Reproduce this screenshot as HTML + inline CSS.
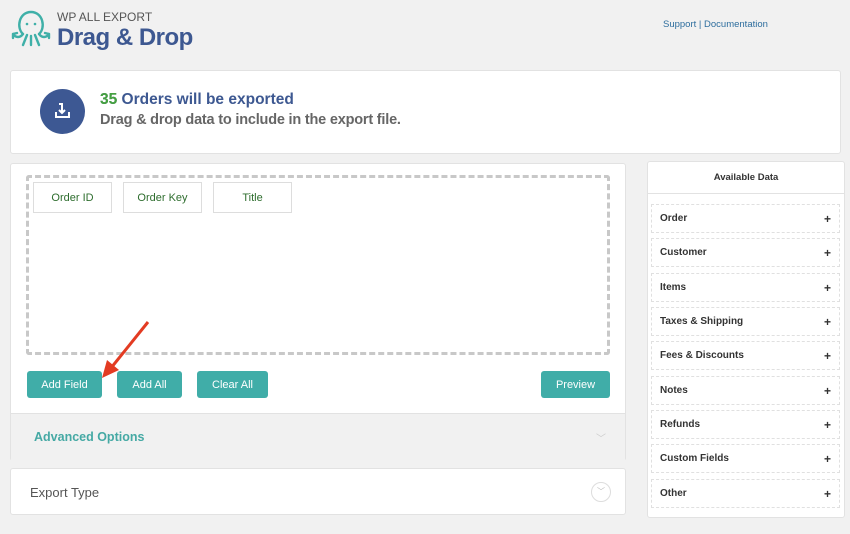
<!DOCTYPE html><html><head><style>
body{margin:0;width:850px;height:534px;background:#f1f1f1;font-family:"Liberation Sans",sans-serif;position:relative;overflow:hidden}
.a{position:absolute}
.box{position:absolute;background:#fff;border:1px solid #e2e2e2;border-radius:3px;box-sizing:border-box}
.fld{position:absolute;top:182px;height:31px;border:1px solid #ddd;box-sizing:border-box;color:#2e6d2e;font-size:11px;text-align:center;line-height:31px;background:#fff}
.btn{position:absolute;top:371px;height:27px;background:#40ada8;color:#fff;font-size:11px;text-align:center;line-height:28px;border-radius:3px}
.row{position:absolute;left:651px;width:189px;height:29px;border:1px dashed #e0e0e0;box-sizing:border-box;font-size:10px;font-weight:bold;color:#333;line-height:28px;padding-left:8px;background:#fff}
.row b{position:absolute;right:8px;top:0;font-size:12px}
</style></head><body>
<svg class="a" style="left:10px;top:8px" width="42" height="42" viewBox="0 0 42 42" fill="none" stroke="#3fb0a8" stroke-width="2.4" stroke-linecap="round">
<path d="M13 26 C6 20 9 4 21 4 C33 4 36 20 29 26"/><circle cx="17" cy="16" r="1.3" fill="#3fb0a8" stroke="none"/><circle cx="25" cy="16" r="1.3" fill="#3fb0a8" stroke="none"/>
<path d="M13 26 C10 30 6 30 3 26 M3 26 L3 30 M3 26 L7 25"/><path d="M29 26 C32 30 36 30 39 26 M39 26 L39 30 M39 26 L35 25"/>
<path d="M17 27 L13 37 M21 28 L21 37 M25 27 L29 37"/></svg>
<div class="a" style="left:57px;top:10px;font-size:12px;color:#555">WP ALL EXPORT</div>
<div class="a" style="left:57px;top:24px;font-size:24px;font-weight:bold;color:#3d5891;letter-spacing:-0.5px">Drag &amp; Drop</div>
<div class="a" style="left:663px;top:19px;font-size:9.5px;color:#2e6e9e">Support | Documentation</div>
<div class="box" style="left:10px;top:70px;width:831px;height:84px"></div>
<div class="a" style="left:40px;top:89px;width:45px;height:45px;border-radius:50%;background:#3d5893"></div>
<svg class="a" style="left:53px;top:101px" width="19" height="19" viewBox="0 0 19 19" fill="none" stroke="#fff" stroke-width="2"><path d="M3 11v5h13v-5M6 3h3v8M6 9l3 3 3-3"/></svg>
<div class="a" style="left:100px;top:91px;font-size:15.5px;font-weight:bold;color:#3d5891">35 Orders will be exported</div>
<div class="a" style="left:100px;top:91px;font-size:15.5px;font-weight:bold;color:#46a23f">35</div>
<div class="a" style="left:100px;top:112px;font-size:14.5px;font-weight:bold;color:#666;letter-spacing:-0.2px">Drag &amp; drop data to include in the export file.</div>
<div class="box" style="left:10px;top:163px;width:616px;height:298px"></div>
<div class="a" style="left:26px;top:175px;width:584px;height:180px;border:3px dashed #c8c8c8;box-sizing:border-box;border-radius:3px"></div>
<div class="fld" style="left:33px;width:79px">Order ID</div>
<div class="fld" style="left:123px;width:79px">Order Key</div>
<div class="fld" style="left:213px;width:79px">Title</div>
<div class="btn" style="left:27px;width:75px">Add Field</div>
<div class="btn" style="left:117px;width:65px">Add All</div>
<div class="btn" style="left:197px;width:71px">Clear All</div>
<div class="btn" style="left:541px;width:69px">Preview</div>
<svg class="a" style="left:95px;top:318px" width="60" height="60"><path d="M53 4 L16 50" stroke="#e33b22" stroke-width="3"/><path d="M7 60 L12 42 L24 52 Z" fill="#e33b22"/></svg>
<div class="a" style="left:11px;top:413px;width:614px;height:47px;background:#f1f1f1;border-top:1px solid #e2e2e2"></div>
<div class="a" style="left:34px;top:430px;font-size:12.5px;font-weight:bold;color:#45a9a4">Advanced Options</div>
<div class="a" style="left:596px;top:430px;font-size:10px;color:#ccc">﹀</div>
<div class="box" style="left:10px;top:468px;width:616px;height:47px"></div>
<div class="a" style="left:30px;top:485px;font-size:13px;color:#555">Export Type</div>
<div class="a" style="left:591px;top:482px;width:20px;height:20px;border:1px solid #ddd;border-radius:50%;box-sizing:border-box;font-size:8px;color:#bbb;text-align:center;line-height:18px">﹀</div>
<div class="box" style="left:647px;top:161px;width:198px;height:357px"></div>
<div class="a" style="left:648px;top:193px;width:196px;border-top:1px solid #e2e2e2"></div>
<div class="a" style="left:647px;top:172px;width:198px;text-align:center;font-size:9.5px;font-weight:bold;color:#333">Available Data</div>
<div class="row" style="top:204px">Order<b>+</b></div>
<div class="row" style="top:238px">Customer<b>+</b></div>
<div class="row" style="top:273px">Items<b>+</b></div>
<div class="row" style="top:307px">Taxes &amp; Shipping<b>+</b></div>
<div class="row" style="top:341px">Fees &amp; Discounts<b>+</b></div>
<div class="row" style="top:376px">Notes<b>+</b></div>
<div class="row" style="top:410px">Refunds<b>+</b></div>
<div class="row" style="top:444px">Custom Fields<b>+</b></div>
<div class="row" style="top:479px">Other<b>+</b></div>
</body></html>
